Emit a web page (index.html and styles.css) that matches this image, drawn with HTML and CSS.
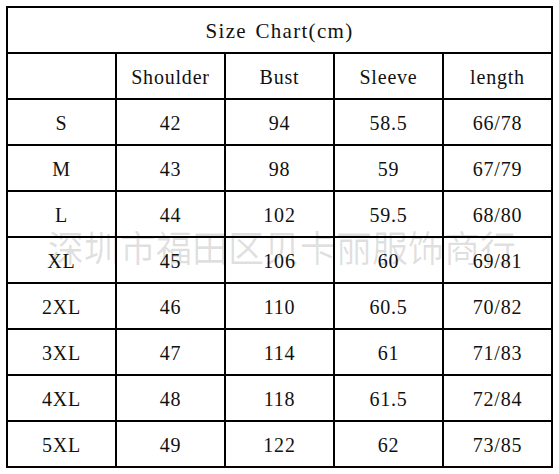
FILE: index.html
```html
<!DOCTYPE html>
<html>
<head>
<meta charset="utf-8">
<link rel="stylesheet" href="styles.css">
</head>
<body>
<div class="chart">
  <table class="size-table">
    <tr><td class="title" colspan="5">Size Chart(cm)</td></tr>
    <tr><td></td><td>Shoulder</td><td>Bust</td><td>Sleeve</td><td>length</td></tr>
    <tr><td>S</td><td>42</td><td>94</td><td>58.5</td><td>66/78</td></tr>
    <tr><td>M</td><td>43</td><td>98</td><td>59</td><td>67/79</td></tr>
    <tr><td>L</td><td>44</td><td>102</td><td>59.5</td><td>68/80</td></tr>
    <tr><td>XL</td><td>45</td><td>106</td><td>60</td><td>69/81</td></tr>
    <tr><td>2XL</td><td>46</td><td>110</td><td>60.5</td><td>70/82</td></tr>
    <tr><td>3XL</td><td>47</td><td>114</td><td>61</td><td>71/83</td></tr>
    <tr><td>4XL</td><td>48</td><td>118</td><td>61.5</td><td>72/84</td></tr>
    <tr><td>5XL</td><td>49</td><td>122</td><td>62</td><td>73/85</td></tr>
  </table>
  <div class="watermark">深圳市福田区贝卡丽服饰商行</div>
</div>
</body>
</html>
```

FILE: styles.css
```css
html, body {
  margin: 0;
  padding: 0;
  background: #ffffff;
}

body {
  padding: 6px;
}

.chart {
  position: relative;
  width: 547px;
}

.size-table {
  border-collapse: separate;
  border-spacing: 2px;
  background: #000000;
}

.size-table td {
  background: #ffffff;
  width: 107px;
  height: 44px;
  padding: 3px 0 0 0;
  box-sizing: border-box;
  text-align: center;
  vertical-align: middle;
  font-family: "Liberation Serif", serif;
  font-size: 20px;
  letter-spacing: 0.8px;
  color: #111111;
}

.size-table td.title {
  font-size: 21px;
  letter-spacing: 1.3px;
  word-spacing: 2px;
}

.watermark {
  position: absolute;
  left: 42px;
  top: 214px;
  font-family: "Noto Sans CJK SC", sans-serif;
  font-size: 36px;
  color: rgba(0, 0, 0, 0.12);
  white-space: nowrap;
  pointer-events: none;
}
```
